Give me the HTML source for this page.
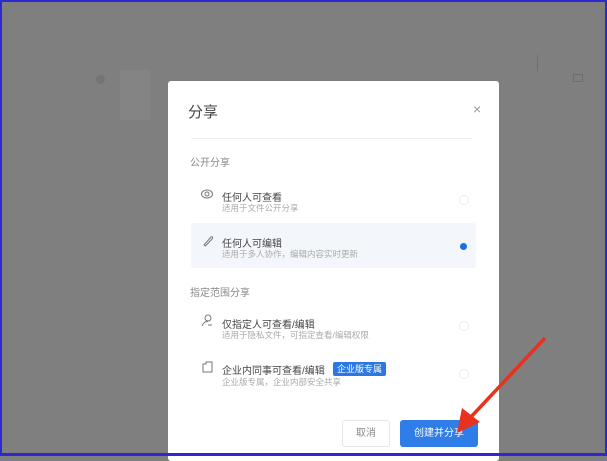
<!DOCTYPE html><html><head><meta charset="utf-8"><style>
*{margin:0;padding:0;box-sizing:border-box}
body{width:607px;height:456px;overflow:hidden;background:#7f7f7f;position:relative;font-family:"Liberation Sans","Noto Sans CJK SC",sans-serif}
.frame{position:absolute;inset:0;border:2px solid #2a2ad0;border-bottom-width:3px;z-index:10;pointer-events:none}
.a{position:absolute}
.dlg{position:absolute;left:168px;top:81px;width:331px;height:380px;background:#fff;border-radius:3px}
.t{position:absolute;white-space:nowrap}
.h{font-size:10px;color:#444}
.s{font-size:8.5px;color:#aaa}
.sec{font-size:10px;color:#888}
.radio{position:absolute;width:10px;height:10px;border-radius:50%;border:1px solid #eee}
</style></head><body>
<div class="a" style="left:96px;top:75px;width:9px;height:9px;border-radius:50%;background:#747474"></div>
<div class="a" style="left:120px;top:70px;width:30px;height:50px;background:#848484"></div>
<div class="a" style="left:537px;top:55px;width:1px;height:16px;background:#6e6e6e"></div>
<div class="a" style="left:573px;top:74px;width:10px;height:8px;border:1px solid #6e6e6e"></div>
<div class="dlg">
<div class="t" style="left:20px;top:20px;font-size:15px;color:#444">分享</div>
<div class="t" style="left:305px;top:20px;font-size:14px;color:#999">×</div>
<div class="a" style="left:23px;top:57px;width:281px;height:1px;background:#eee"></div>
<div class="t sec" style="left:22px;top:73px">公开分享</div>
<svg class="a" style="left:33px;top:108px" width="12" height="10" viewBox="0 0 12 10"><ellipse cx="6" cy="5" rx="5.5" ry="4" fill="none" stroke="#777"/><circle cx="6" cy="5" r="2" fill="none" stroke="#777"/></svg>
<div class="t h" style="left:54px;top:108px">任何人可查看</div>
<div class="t s" style="left:54px;top:121px">适用于文件公开分享</div>
<div class="radio" style="left:291px;top:114px"></div>
<div class="a" style="left:23px;top:142px;width:285px;height:45px;background:#f3f6fa;border-radius:3px"></div>
<svg class="a" style="left:34px;top:154px" width="12" height="12" viewBox="0 0 12 12"><path d="M2 10 L9 2 Q11 1 10.5 3.5 L3.5 11 Z" fill="none" stroke="#777"/></svg>
<div class="t h" style="left:54px;top:154px">任何人可编辑</div>
<div class="t s" style="left:54px;top:167px">适用于多人协作，编辑内容实时更新</div>
<div class="a" style="left:292px;top:162px;width:7px;height:7px;border-radius:50%;background:#1a6fe6"></div>
<div class="t sec" style="left:22px;top:203px">指定范围分享</div>
<svg class="a" style="left:33px;top:233px" width="13" height="13" viewBox="0 0 13 13"><circle cx="7" cy="4" r="3" fill="none" stroke="#777"/><path d="M1 12 Q3 7 7 7.5 M7 11 L11 11" fill="none" stroke="#777"/></svg>
<div class="t h" style="left:54px;top:235px">仅指定人可查看/编辑</div>
<div class="t s" style="left:54px;top:248px">适用于隐私文件，可指定查看/编辑权限</div>
<div class="radio" style="left:291px;top:240px"></div>
<svg class="a" style="left:34px;top:280px" width="11" height="12" viewBox="0 0 11 12"><path d="M1 3 L4 3 L4 1 L10 1 L10 11 L1 11 Z" fill="none" stroke="#777"/></svg>
<div class="t h" style="left:54px;top:281px">企业内同事可查看/编辑</div>
<div class="a" style="left:165px;top:281px;width:53px;height:14px;background:#2b78e4;border-radius:2px;color:#fff;font-size:9px;line-height:14px;text-align:center">企业版专属</div>
<div class="t s" style="left:54px;top:295px">企业版专属，企业内部安全共享</div>
<div class="radio" style="left:291px;top:288px"></div>
<div class="a" style="left:174px;top:339px;width:48px;height:27px;border:1px solid #e6e6e6;border-radius:3px;font-size:10px;color:#888;text-align:center;line-height:25px">取消</div>
<div class="a" style="left:232px;top:339px;width:78px;height:27px;background:#2f7de8;border-radius:3px;font-size:10px;color:#fff;text-align:center;line-height:27px">创建并分享</div>
</div>
<svg class="a" style="left:0;top:0;z-index:5" width="607" height="456"><line x1="545" y1="338" x2="470" y2="418" stroke="#e8321e" stroke-width="3.5"/><polygon points="457,433 462,408 480,422" fill="#e8321e"/></svg>
<div class="frame"></div>
</body></html>
